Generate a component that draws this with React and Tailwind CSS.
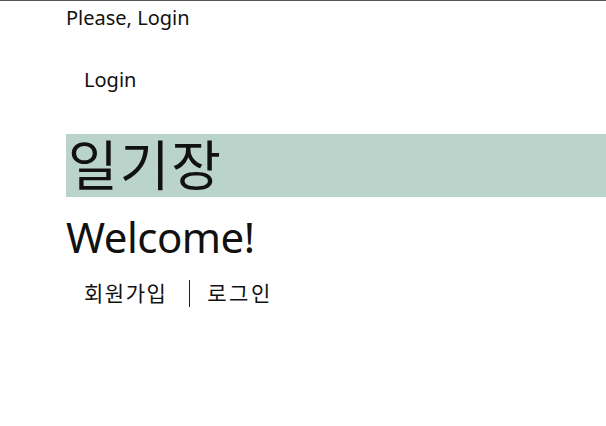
import React from 'react';

const font = { fontFamily: '"Noto Sans", "Noto Sans CJK KR", sans-serif' };

export default function App() {
    return (
        <div className="min-h-screen bg-white border-t border-[#555] text-[#111]" style={font}>
            <div className="pl-[66px]">
                {/* status */}
                <p className="text-[20px] leading-[34px] h-[34px]">Please, Login</p>

                {/* nav */}
                <nav className="pl-[18px] pt-[34px] h-[99px]">
                    <span className="text-[20px] leading-[20px]">Login</span>
                </nav>

                {/* title */}
                <div className="bg-[#bad4cc] h-[63px] flex items-center pl-[2px]">
                    <h1 className="text-[54px] leading-[63px] tracking-[2px]">일기장</h1>
                </div>

                <h2 className="text-[42px] leading-[58px] mt-[11px] tracking-[-0.5px]">Welcome!</h2>

                <div className="flex items-center pl-[18px] mt-[12px] text-[21px]">
                    <span className="tracking-[1.5px]">회원가입</span>
                    <span className="w-px h-[27px] bg-[#222] ml-[22px] mr-[17px]"></span>
                    <span className="tracking-[2.5px]">로그인</span>
                </div>
            </div>
        </div>
    );
}
